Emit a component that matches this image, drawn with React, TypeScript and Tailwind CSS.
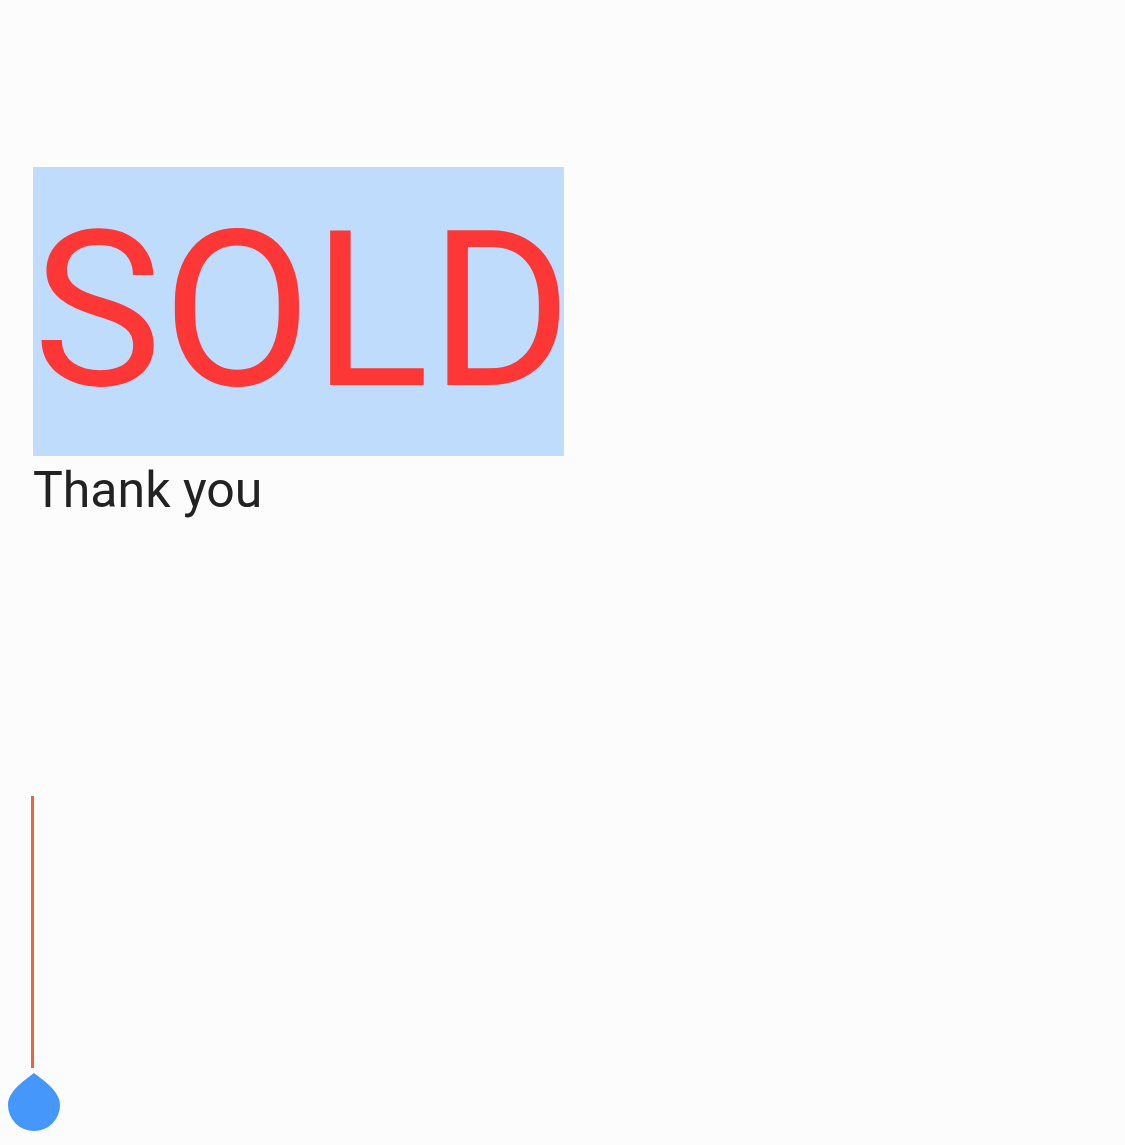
import React from 'react';

const Handle: React.FC = () => (
  <svg width="52" height="58" viewBox="0 0 52 58" className="block">
    <path
      d="M26 0 C 38 9, 52 19, 52 32 A26 26 0 0 1 0 32 C 0 19, 14 9, 26 0 Z"
      fill="#4597fb"
    />
  </svg>
);

export default function App() {
  return (
    <div className="min-h-[1145px] w-full bg-[#fcfcfc] font-['Roboto',sans-serif]">
      <div className="pl-[33px] pt-[167px]">
        <div className="flex">
          <span className="block w-[531px] bg-[#bfdcfd] pl-0 text-[217px] leading-[289px] tracking-[0.5px] text-[#fd3636]">
            SOLD
          </span>
        </div>
        <p className="mt-[5px] text-[50px] leading-[58px] text-[#222222]">Thank you</p>
      </div>
      <div className="mt-[277px] flex flex-col items-start pl-[8px]">
        <div className="ml-[23px] h-[272px] w-[3px] bg-[#f0623c]" />
        <div className="mt-[5px]">
          <Handle />
        </div>
      </div>
    </div>
  );
}
